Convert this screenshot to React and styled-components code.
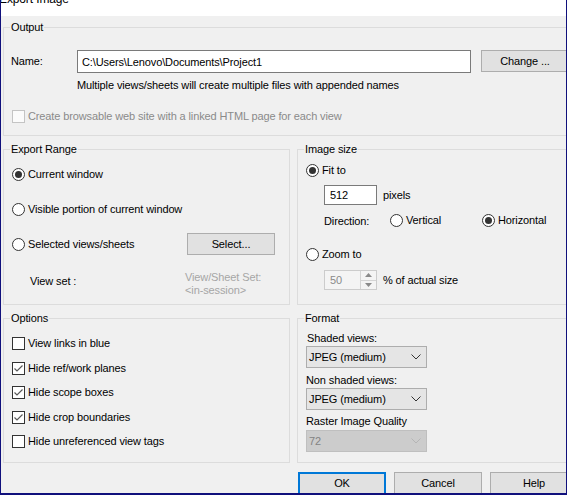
import React from "react";
import styled, { createGlobalStyle } from "styled-components";

const NAVY = "#10107c";
const FONT = `"Liberation Sans", Arial, sans-serif`;

const GlobalStyle = createGlobalStyle`
  *, *::before, *::after { box-sizing: border-box; }
  html, body { margin: 0; padding: 0; background: #f0f0f0; }
  body { font-family: ${FONT}; font-size: 11px; letter-spacing: -0.12px; color: #000; }
`;

const Window = styled.div`
  width: 567px;
  height: 495px;
  overflow: hidden;
  background: #f0f0f0;
  border-left: 1px solid ${NAVY};
  border-right: 1px solid ${NAVY};
  border-bottom: 2px solid ${NAVY};
  display: flex;
  flex-direction: column;
`;

const TitleBar = styled.div`
  flex: none;
  height: 16px;
  background: #fff;
  overflow: hidden;
`;

const TitleText = styled.div`
  margin: -9px 0 0 -2px;
  font-size: 12px;
  line-height: 16px;
  white-space: nowrap;
`;

const Body = styled.div`
  flex: 1;
  min-height: 0;
  display: flex;
  flex-direction: column;
  padding: 11px 0 0 2px;
`;

const Group = styled.div`
  flex: none;
  border: 1px solid #dcdcdc;
  padding-left: 8px;
  display: flex;
  flex-direction: column;
  min-width: 0;
  ${(p) => (p.$w ? `width: ${p.$w}px;` : "")}
  ${(p) => (p.$h ? `height: ${p.$h}px;` : "")}
`;

const GroupTitle = styled.div`
  align-self: flex-start;
  height: 15px;
  line-height: 15px;
  margin: -8px 0 0 -2px;
  padding: 0 1px;
  background: #f0f0f0;
  white-space: nowrap;
`;

const NameRow = styled.div`
  display: flex;
  align-items: flex-start;
  margin: 15px 0 0 -1px;
`;

const NameLabel = styled.div`
  width: 66px;
  line-height: 23px;
`;

const TextField = styled.input`
  width: ${(p) => p.$w}px;
  height: ${(p) => p.$h}px;
  border: 1px solid #7a7a7a;
  background: #fff;
  font: inherit;
  letter-spacing: inherit;
  color: #000;
  padding: 0 0 0 ${(p) => p.$pad}px;
  margin: 0;
  outline: none;
`;

const PushButton = styled.button`
  flex: none;
  width: 88px;
  height: ${(p) => (p.$tall ? 23 : 22)}px;
  margin: 0 0 0 ${(p) => p.$ml || 0}px;
  padding: 0;
  font: inherit;
  letter-spacing: inherit;
  color: #000;
  background: #e1e1e1;
  border: ${(p) => (p.$default ? "2px solid #0078d7" : "1px solid #adadad")};
  text-align: center;
  line-height: 1;
`;

const Note = styled.div`
  margin: 5px 0 0 65px;
  line-height: 15px;
  white-space: nowrap;
`;

const Row = styled.div`
  display: flex;
  align-items: center;
  height: ${(p) => p.$h || 15}px;
  margin-top: ${(p) => p.$mt || 0}px;
  margin-left: ${(p) => p.$ml || 0}px;
  white-space: nowrap;
`;

const RadioCircle = styled.span`
  flex: none;
  width: 13px;
  height: 13px;
  border: 1px solid #333;
  border-radius: 50%;
  background: #fff;
  display: flex;
  align-items: center;
  justify-content: center;
  margin-right: 3px;
  &::after {
    content: "";
    width: 7px;
    height: 7px;
    border-radius: 50%;
    background: ${(p) => (p.$on ? "#333" : "transparent")};
  }
`;

const Box = styled.span`
  flex: none;
  width: 13px;
  height: 13px;
  border: 1px solid ${(p) => (p.$disabled ? "#c4c4c4" : "#333")};
  background: ${(p) => (p.$disabled ? "#fbfbfb" : "#fff")};
  margin-right: 3px;
  display: flex;
  align-items: center;
  justify-content: center;
`;

const Label = styled.span`
  color: ${(p) => (p.$disabled ? "#8a8a8a" : "#000")};
  line-height: 15px;
`;

const Radio = ({ on, children }) => (
  <>
    <RadioCircle $on={on} />
    <Label>{children}</Label>
  </>
);

const Check = ({ on, disabled, children }) => (
  <>
    <Box $disabled={disabled}>
      {on && (
        <svg width="11" height="11" viewBox="0 0 11 11">
          <polyline
            points="1.5,5.5 4,8 9.5,2.5"
            fill="none"
            stroke="#5a5a5a"
            strokeWidth="1.2"
          />
        </svg>
      )}
    </Box>
    <Label $disabled={disabled}>{children}</Label>
  </>
);

const Grid = styled.div`
  margin-top: 13px;
  display: grid;
  grid-template-columns: 287px 300px;
  grid-template-rows: 156px 145px;
  column-gap: 7px;
  row-gap: 13px;
`;

const RadioList = styled.div`
  display: flex;
  flex-direction: column;
  gap: 13px;
  margin-top: 6px;
`;

const RangeRow = styled.div`
  display: grid;
  grid-template-columns: 175px 88px;
  align-items: center;
  height: 22px;
  white-space: nowrap;
`;

const RangeChoice = styled.div`
  display: flex;
  align-items: center;
`;

const ViewSetRow = styled.div`
  display: flex;
  align-items: flex-start;
  margin: 16px 0 0 18px;
`;

const ViewSetLabel = styled.div`
  width: 155px;
  margin-top: 3px;
  line-height: 15px;
`;

const GrayBlock = styled.div`
  color: #a6a6a6;
  line-height: 13px;
`;

const DirLabel = styled.span`
  width: 66px;
`;

const DirChoice = styled.span`
  display: flex;
  align-items: center;
  width: ${(p) => p.$w || "auto"};
`;

const Suffix = styled.span`
  margin-left: 6px;
  line-height: 15px;
`;

const SpinBox = styled.div`
  display: flex;
  width: 53px;
  height: 20px;
  border: 1px solid #cccccc;
  background: #f4f4f4;
`;

const SpinValue = styled.div`
  flex: 1;
  padding-left: 5px;
  line-height: 18px;
  color: #8a8a8a;
`;

const SpinButtons = styled.div`
  width: 16px;
  border-left: 1px solid #d4d4d4;
  display: flex;
  flex-direction: column;
`;

const SpinHalf = styled.div`
  flex: 1;
  display: flex;
  align-items: center;
  justify-content: center;
  & + & {
    border-top: 1px solid #d4d4d4;
  }
`;

const CheckList = styled.div`
  display: flex;
  flex-direction: column;
  gap: 9.5px;
  margin-top: 10px;
`;

const FieldLabel = styled.div`
  line-height: 15px;
  margin-top: ${(p) => p.$mt}px;
  margin-left: ${(p) => p.$ml || 0}px;
  white-space: nowrap;
`;

const Combo = styled.div`
  width: 121px;
  height: 22px;
  margin-top: ${(p) => p.$mt}px;
  display: flex;
  align-items: center;
  justify-content: space-between;
  padding: 0 5px 0 2px;
  background: ${(p) => (p.$disabled ? "#cccccc" : "#e5e5e5")};
  border: 1px solid ${(p) => (p.$disabled ? "#bfbfbf" : "#adadad")};
  color: ${(p) => (p.$disabled ? "#838383" : "#000")};
`;

const Chevron = ({ color }) => (
  <svg width="10" height="6" viewBox="0 0 10 6">
    <polyline points="0.5,0.5 5,5 9.5,0.5" fill="none" stroke={color} strokeWidth="1" />
  </svg>
);

const Footer = styled.div`
  margin-top: 9px;
  padding-left: 295px;
  display: flex;
  gap: 8px;
`;

export default function App() {
  return (
    <>
      <GlobalStyle />
      <Window>
        <TitleBar>
          <TitleText>Export Image</TitleText>
        </TitleBar>
        <Body>
          <Group $w={600} $h={109}>
            <GroupTitle>Output</GroupTitle>
            <NameRow>
              <NameLabel>Name:</NameLabel>
              <TextField
                $w={394}
                $h={23}
                $pad={4}
                readOnly
                value={"C:\\Users\\Lenovo\\Documents\\Project1"}
              />
              <PushButton $ml={10}>Change ...</PushButton>
            </NameRow>
            <Note>Multiple views/sheets will create multiple files with appended names</Note>
            <Row $mt={16}>
              <Check disabled>Create browsable web site with a linked HTML page for each view</Check>
            </Row>
          </Group>

          <Grid>
            <Group>
              <GroupTitle>Export Range</GroupTitle>
              <RadioList>
                <RangeRow>
                  <RangeChoice>
                    <Radio on>Current window</Radio>
                  </RangeChoice>
                </RangeRow>
                <RangeRow>
                  <RangeChoice>
                    <Radio>Visible portion of current window</Radio>
                  </RangeChoice>
                </RangeRow>
                <RangeRow>
                  <RangeChoice>
                    <Radio>Selected views/sheets</Radio>
                  </RangeChoice>
                  <PushButton>Select...</PushButton>
                </RangeRow>
              </RadioList>
              <ViewSetRow>
                <ViewSetLabel>View set :</ViewSetLabel>
                <GrayBlock>
                  View/Sheet Set:
                  <br />
                  &lt;in-session&gt;
                </GrayBlock>
              </ViewSetRow>
            </Group>

            <Group>
              <GroupTitle>Image size</GroupTitle>
              <Row $mt={6}>
                <Radio on>Fit to</Radio>
              </Row>
              <Row $mt={7} $ml={18} $h={20}>
                <TextField $w={53} $h={20} $pad={5} readOnly value="512" />
                <Suffix>pixels</Suffix>
              </Row>
              <Row $mt={8} $ml={18}>
                <DirLabel>Direction:</DirLabel>
                <DirChoice $w="92px">
                  <Radio>Vertical</Radio>
                </DirChoice>
                <DirChoice>
                  <Radio on>Horizontal</Radio>
                </DirChoice>
              </Row>
              <Row $mt={19}>
                <Radio>Zoom to</Radio>
              </Row>
              <Row $mt={8} $ml={18} $h={20}>
                <SpinBox>
                  <SpinValue>50</SpinValue>
                  <SpinButtons>
                    <SpinHalf>
                      <svg width="7" height="4" viewBox="0 0 7 4">
                        <polygon points="0,4 3.5,0 7,4" fill="#8a8a8a" />
                      </svg>
                    </SpinHalf>
                    <SpinHalf>
                      <svg width="7" height="4" viewBox="0 0 7 4">
                        <polygon points="0,0 3.5,4 7,0" fill="#8a8a8a" />
                      </svg>
                    </SpinHalf>
                  </SpinButtons>
                </SpinBox>
                <Suffix>% of actual size</Suffix>
              </Row>
            </Group>

            <Group>
              <GroupTitle>Options</GroupTitle>
              <CheckList>
                <Row>
                  <Check>View links in blue</Check>
                </Row>
                <Row>
                  <Check on>Hide ref/work planes</Check>
                </Row>
                <Row>
                  <Check on>Hide scope boxes</Check>
                </Row>
                <Row>
                  <Check on>Hide crop boundaries</Check>
                </Row>
                <Row>
                  <Check>Hide unreferenced view tags</Check>
                </Row>
              </CheckList>
            </Group>

            <Group>
              <GroupTitle>Format</GroupTitle>
              <FieldLabel $mt={4.5} $ml={1}>Shaded views:</FieldLabel>
              <Combo $mt={0.5}>
                <span>JPEG (medium)</span>
                <Chevron color="#333" />
              </Combo>
              <FieldLabel $mt={4.5}>Non shaded views:</FieldLabel>
              <Combo $mt={0.5}>
                <span>JPEG (medium)</span>
                <Chevron color="#333" />
              </Combo>
              <FieldLabel $mt={3.5}>Raster Image Quality</FieldLabel>
              <Combo $mt={1.5} $disabled>
                <span>72</span>
                <Chevron color="#b5b5b5" />
              </Combo>
            </Group>
          </Grid>

          <Footer>
            <PushButton $tall $default>OK</PushButton>
            <PushButton $tall>Cancel</PushButton>
            <PushButton $tall>Help</PushButton>
          </Footer>
        </Body>
      </Window>
    </>
  );
}
